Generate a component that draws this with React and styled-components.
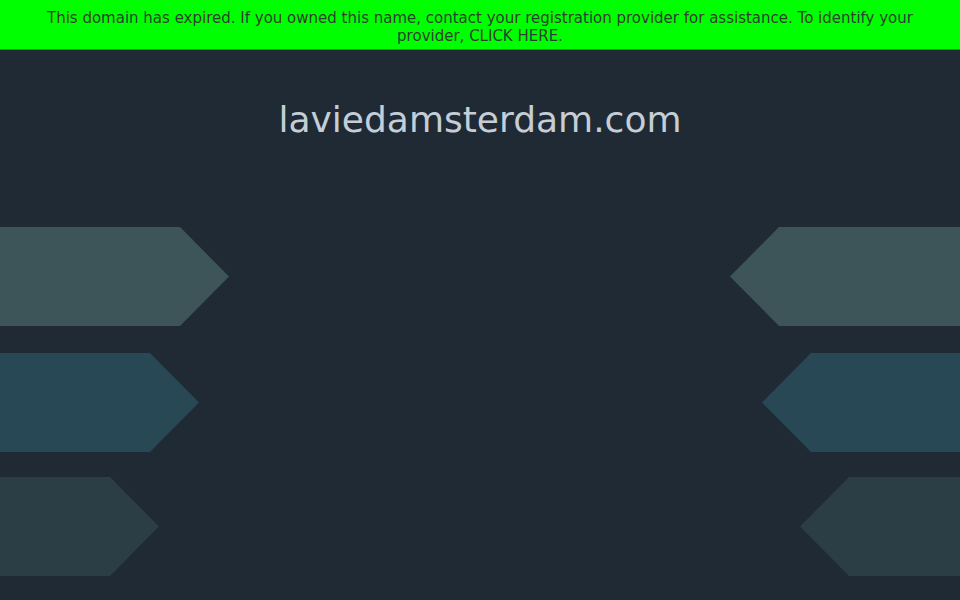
import React from "react";
import styled, { createGlobalStyle } from "styled-components";

const Global = createGlobalStyle`
  html, body { margin: 0; padding: 0; }
  body {
    background: #1f2a35;
    font-family: "DejaVu Sans", "Liberation Sans", sans-serif;
    overflow: hidden;
  }
`;

const Page = styled.div`
  width: 960px;
  height: 600px;
  display: flex;
  flex-direction: column;
  background: #1f2a35;
`;

const Banner = styled.p`
  margin: 0;
  background: #00ff00;
  height: 50px;
  box-sizing: border-box;
  padding: 9px 44px 0;
  text-align: center;
  font-size: 15px;
  line-height: 18px;
  color: #2f3f2f;
  border-bottom: 1px solid #3d8a3d;
`;

const Domain = styled.h1`
  margin: 48px 0 0;
  text-align: center;
  font-weight: normal;
  font-size: 36px;
  line-height: 44px;
  color: #c5ced6;
`;

const Arrows = styled.div`
  margin-top: 85px;
  display: flex;
  justify-content: space-between;
`;

const Column = styled.div`
  display: flex;
  flex-direction: column;
  align-items: ${(p) => (p.$side === "left" ? "flex-start" : "flex-end")};
`;

const Arrow = styled.div`
  width: ${(p) => p.$w}px;
  height: 99px;
  margin-top: ${(p) => p.$gap}px;
  background: ${(p) => p.$c};
  clip-path: ${(p) =>
    p.$side === "left"
      ? "polygon(0 0, calc(100% - 49px) 0, 100% 50%, calc(100% - 49px) 100%, 0 100%)"
      : "polygon(49px 0, 100% 0, 100% 100%, 49px 100%, 0 50%)"};
`;

const left = [
  { w: 229, c: "#3d5558", gap: 0 },
  { w: 199, c: "#284855", gap: 27 },
  { w: 159, c: "#2c3e45", gap: 25 },
];
const right = [
  { w: 230, c: "#3d5558", gap: 0 },
  { w: 198, c: "#284855", gap: 27 },
  { w: 160, c: "#2c3e45", gap: 25 },
];

export default function App() {
  return (
    <Page>
      <Global />
      <Banner>
        This domain has expired. If you owned this name, contact your registration provider for
        assistance. To identify your provider, CLICK HERE.
      </Banner>
      <Domain>laviedamsterdam.com</Domain>
      <Arrows>
        <Column $side="left">
          {left.map((a, i) => (
            <Arrow key={i} $side="left" $w={a.w} $c={a.c} $gap={a.gap} />
          ))}
        </Column>
        <Column $side="right">
          {right.map((a, i) => (
            <Arrow key={i} $side="right" $w={a.w} $c={a.c} $gap={a.gap} />
          ))}
        </Column>
      </Arrows>
    </Page>
  );
}
